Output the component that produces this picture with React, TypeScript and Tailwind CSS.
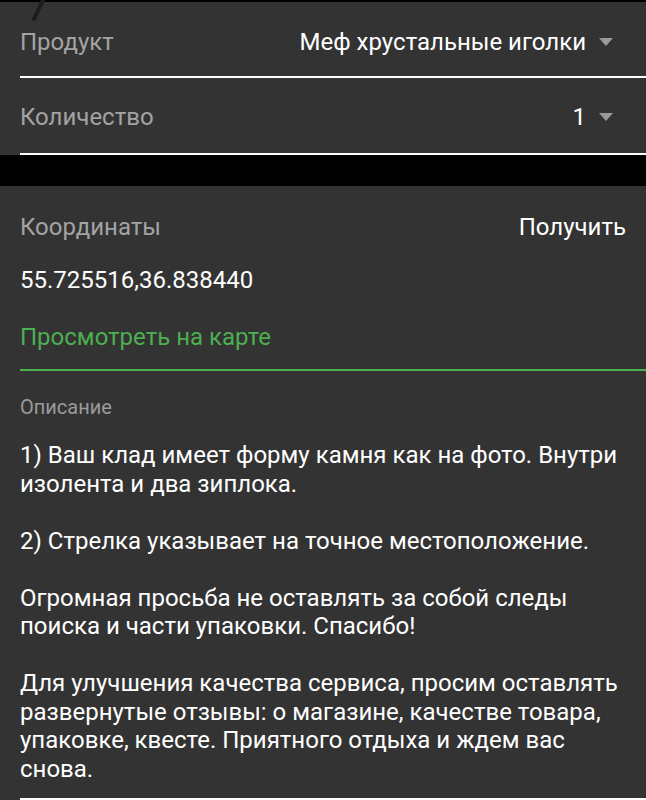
import React from 'react';

function Caret() {
  return (
    <svg width="16" height="8" viewBox="0 0 16 8" className="ml-3 shrink-0">
      <path d="M1 0 L15 0 L8 8 Z" fill="#9a9a9a" />
    </svg>
  );
}

function SelectRow({ label, value }: { label: string; value: string }) {
  return (
    <div className="flex items-center justify-between pr-8">
      <span className="text-[#a3a3a3]">{label}</span>
      <span className="flex items-center text-white">
        {value}
        <Caret />
      </span>
    </div>
  );
}

const paragraphs = [
  '1) Ваш клад имеет форму камня как на фото. Внутри изолента и два зиплока.',
  '2) Стрелка указывает на точное местоположение.',
  'Огромная просьба не оставлять за собой следы поиска и части упаковки. Спасибо!',
  'Для улучшения качества сервиса, просим оставлять развернутые отзывы: о магазине, качестве товара, упаковке, квесте. Приятного отдыха и ждем вас снова.',
];

export default function App() {
  return (
    <div className="relative w-[646px] h-[800px] overflow-hidden bg-[#333333] font-['Roboto',sans-serif] text-[24px] leading-[28px]">
      <div className="h-[2px] bg-black" />

      {/* stray mark at the top edge */}
      <svg className="absolute left-[28px] top-0" width="20" height="24" viewBox="0 0 20 24">
        <path d="M15 0 L6 19" stroke="#1c1c1c" strokeWidth="4" strokeLinecap="round" />
      </svg>

      <div className="pl-5">
        <div className="h-[74px] pt-[6px] flex flex-col justify-center">
          <SelectRow label="Продукт" value="Меф хрустальные иголки" />
        </div>
        <div className="h-[2px] bg-white" />
        <div className="h-[75px] pt-[3px] flex flex-col justify-center">
          <SelectRow label="Количество" value="1" />
        </div>
        <div className="h-[2px] bg-white" />
      </div>

      <div className="h-[31px] bg-black" />

      <div className="pl-5">
        <div className="pt-[27px] pr-5 flex items-center justify-between">
          <span className="text-[#a3a3a3]">Координаты</span>
          <span className="text-white">Получить</span>
        </div>
        <div className="mt-[25px] text-white">55.725516,36.838440</div>
        <div className="mt-[29px] text-[#4caf50]">Просмотреть на карте</div>
        <div className="mt-[18px] h-[2px] bg-[#4caf50]" />

        <div className="mt-[24px] text-[20px] leading-[24px] text-[#9a9a9a]">Описание</div>

        <div className="mt-[22px] pr-5 text-white leading-[28.5px] flex flex-col gap-[28.5px]">
          {paragraphs.map((p) => (
            <p key={p}>{p}</p>
          ))}
        </div>
        <div className="mt-[15px] h-[2px] bg-white" />
      </div>
    </div>
  );
}
